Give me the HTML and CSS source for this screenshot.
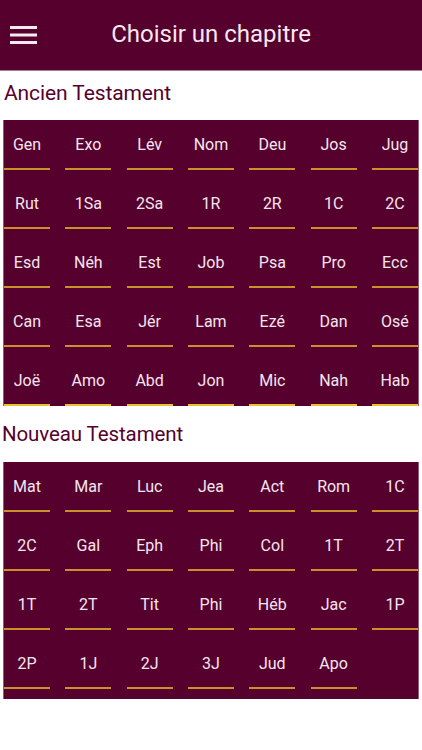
FILE: index.html
```html
<!DOCTYPE html>
<html lang="fr">
<head>
<meta charset="utf-8">
<title>Choisir un chapitre</title>
<link rel="stylesheet" href="styles.css">
</head>
<body>
<header class="topbar">
  <button class="menu" aria-label="Menu">
    <svg width="27" height="19" viewBox="0 0 27 19"><rect x="0" y="0" width="27" height="3" fill="#f4e9ef"/><rect x="0" y="7.5" width="27" height="3" fill="#f4e9ef"/><rect x="0" y="15" width="27" height="3" fill="#f4e9ef"/></svg>
  </button>
  <h1 class="title">Choisir un chapitre</h1>
</header>
<main>
  <h2 class="section section-old">Ancien Testament</h2>
  <div class="grid grid-old">
    <a class="book">Gen</a><a class="book">Exo</a><a class="book">Lév</a><a class="book">Nom</a><a class="book">Deu</a><a class="book">Jos</a><a class="book">Jug</a>
    <a class="book">Rut</a><a class="book">1Sa</a><a class="book">2Sa</a><a class="book">1R</a><a class="book">2R</a><a class="book">1C</a><a class="book">2C</a>
    <a class="book">Esd</a><a class="book">Néh</a><a class="book">Est</a><a class="book">Job</a><a class="book">Psa</a><a class="book">Pro</a><a class="book">Ecc</a>
    <a class="book">Can</a><a class="book">Esa</a><a class="book">Jér</a><a class="book">Lam</a><a class="book">Ezé</a><a class="book">Dan</a><a class="book">Osé</a>
    <a class="book last">Joë</a><a class="book last">Amo</a><a class="book last">Abd</a><a class="book last">Jon</a><a class="book last">Mic</a><a class="book last">Nah</a><a class="book last">Hab</a>
  </div>
  <h2 class="section section-new">Nouveau Testament</h2>
  <div class="grid grid-new">
    <a class="book">Mat</a><a class="book">Mar</a><a class="book">Luc</a><a class="book">Jea</a><a class="book">Act</a><a class="book">Rom</a><a class="book">1C</a>
    <a class="book">2C</a><a class="book">Gal</a><a class="book">Eph</a><a class="book">Phi</a><a class="book">Col</a><a class="book">1T</a><a class="book">2T</a>
    <a class="book">1T</a><a class="book">2T</a><a class="book">Tit</a><a class="book">Phi</a><a class="book">Héb</a><a class="book">Jac</a><a class="book">1P</a>
    <a class="book">2P</a><a class="book">1J</a><a class="book">2J</a><a class="book">3J</a><a class="book">Jud</a><a class="book">Apo</a>
  </div>
</main>
</body>
</html>
```

FILE: styles.css
```css
html, body {
  margin: 0;
  padding: 0;
  background: #ffffff;
  font-family: Roboto, "Noto Sans", sans-serif;
}

.topbar {
  height: 70px;
  background: #56002e;
  border-bottom: 1px solid #a57a92;
  display: flex;
  align-items: center;
  position: relative;
}

.menu {
  background: none;
  border: 0;
  padding: 0;
  margin: 1px 0 0 10px;
  width: 27px;
  height: 19px;
  display: block;
}

.menu svg { display: block; }

.title {
  position: absolute;
  left: 0;
  right: 0;
  top: 0;
  margin: 0;
  line-height: 69px;
  text-align: center;
  font-weight: 400;
  font-size: 24px;
  color: #f4e9ef;
  pointer-events: none;
}

.section {
  margin: 0;
  font-weight: 400;
  color: #56002e;
  display: flex;
  align-items: center;
  box-sizing: border-box;
}

.section-old {
  height: 49px;
  font-size: 21px;
  letter-spacing: -0.1px;
  padding-left: 4px;
  padding-bottom: 5px;
}

.section-new {
  height: 56px;
  font-size: 20.5px;
  letter-spacing: -0.1px;
  padding-left: 2px;
  padding-bottom: 1px;
}

.grid {
  margin: 0 3px;
  background: #56002e;
  border-left: 1px solid #8d5c78;
  border-right: 1px solid #8d5c78;
  display: grid;
  grid-template-columns: repeat(7, 46px);
  justify-content: space-between;
  row-gap: 9px;
}

.grid-new {
  padding-bottom: 10px;
}

.book {
  height: 48px;
  border-bottom: 2px solid #c8912c;
  color: #f4e6ee;
  font-size: 16px;
  display: flex;
  align-items: center;
  justify-content: center;
  cursor: pointer;
}

.book.last {
  border-bottom-color: #e8c230;
}
```
